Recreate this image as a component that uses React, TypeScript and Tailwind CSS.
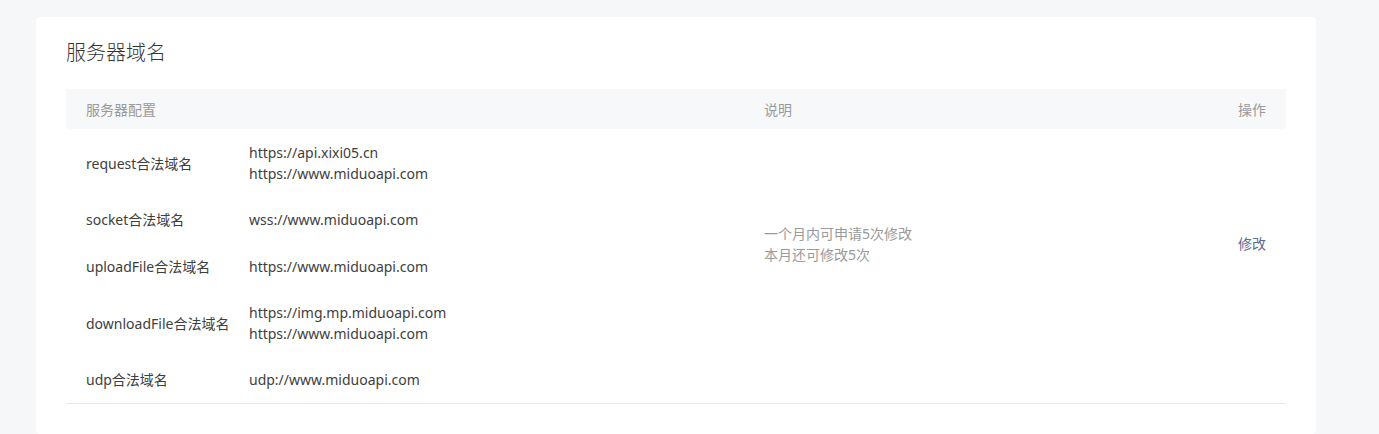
const rows = [
	{ label: "request合法域名", urls: ["https://api.xixi05.cn", "https://www.miduoapi.com"] },
	{ label: "socket合法域名", urls: ["wss://www.miduoapi.com"] },
	{ label: "uploadFile合法域名", urls: ["https://www.miduoapi.com"] },
	{ label: "downloadFile合法域名", urls: ["https://img.mp.miduoapi.com", "https://www.miduoapi.com"] },
	{ label: "udp合法域名", urls: ["udp://www.miduoapi.com"] },
];

export default function App() {
	return (
		<div
			className="min-h-screen bg-[#f6f7f9] pl-[36px] pt-[17px]"
			style={{ fontFamily: '"Noto Sans", "Noto Sans CJK SC", sans-serif' }}
		>
			<div className="w-[1280px] rounded-[4px] bg-white px-[30px] pb-[30px] pt-[22px]">
				<h2 className="text-[20px] font-light leading-[28px] text-[#353535]">服务器域名</h2>

				{/* table header */}
				<div className="mt-[22px] grid h-[40px] grid-cols-[698px_1fr_auto] items-center bg-[#f6f8f9] text-[14px] text-[#9a9a9a]">
					<div className="pl-5">服务器配置</div>
					<div>说明</div>
					<div className="pr-5">操作</div>
				</div>

				{/* table body */}
				<div className="grid grid-cols-[698px_1fr_auto] border-b border-[#e7e7eb] pt-[1px] text-[14px] leading-[21px] text-[#3e3e3e]">
					<div>
						{rows.map((row) => (
							<div
								key={row.label}
								className={`flex items-center ${row.urls.length > 1 ? "py-3" : "py-[13px]"}`}
							>
								<div className="w-[183px] pl-5">{row.label}</div>
								<div>
									{row.urls.map((u) => (
										<div key={u}>{u}</div>
									))}
								</div>
							</div>
						))}
					</div>
					<div className="pt-[93px] text-[#9a9a9a]">
						<div>一个月内可申请5次修改</div>
						<div>本月还可修改5次</div>
					</div>
					<div className="pr-5 pt-[103px]">
						<a className="text-[#576b95]">修改</a>
					</div>
				</div>
			</div>
		</div>
	);
}
